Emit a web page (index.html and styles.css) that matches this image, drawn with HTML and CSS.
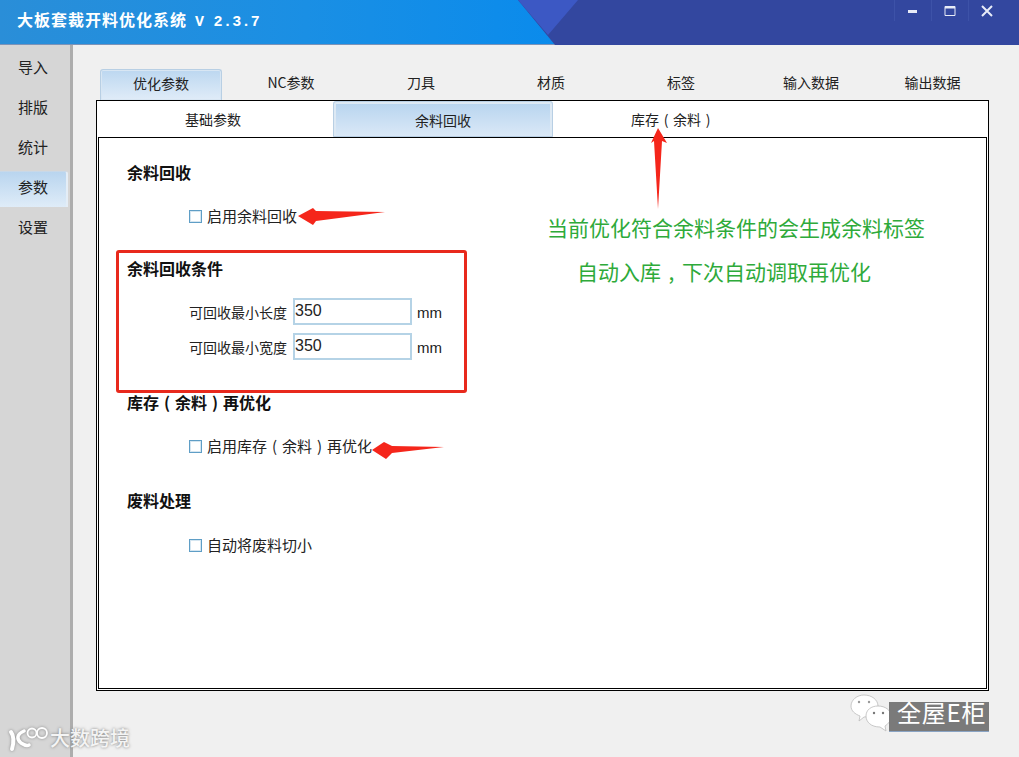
FILE: index.html
```
<!DOCTYPE html>
<html lang="zh">
<head>
<meta charset="utf-8">
<title>大板套裁开料优化系统</title>
<link rel="stylesheet" href="styles.css">
</head>
<body>
<div class="app">
  <header class="titlebar">
    <svg class="title-shape" width="1019" height="45" viewBox="0 0 1019 45">
      <polygon points="518,0 1019,0 1019,45 555,45" fill="#33479f"/>
      <polygon points="518,0 578,0 548,35" fill="#3c58c4"/>
    </svg>
    <h1 class="app-title">大板套裁开料优化系统<span class="version">V 2.3.7</span></h1>
    <div class="win-controls">
      <button class="win-btn" aria-label="最小化"><svg width="12" height="12" viewBox="0 0 12 12"><rect x="1" y="5" width="9" height="3" fill="#e8ecf8"/></svg></button>
      <button class="win-btn" aria-label="最大化"><svg width="12" height="12" viewBox="0 0 12 12"><path d="M1 1.5h10v9H1z" fill="none" stroke="#e8ecf8" stroke-width="1"/><rect x="1" y="1" width="10" height="2.5" fill="#e8ecf8"/></svg></button>
      <button class="win-btn" aria-label="关闭"><svg width="12" height="12" viewBox="0 0 12 12"><path d="M1 1l10 10M11 1L1 11" stroke="#e8ecf8" stroke-width="2"/></svg></button>
    </div>
  </header>
  <div class="workspace">
    <nav class="sidebar">
      <a class="side-item">导入</a>
      <a class="side-item">排版</a>
      <a class="side-item">统计</a>
      <a class="side-item active">参数</a>
      <a class="side-item">设置</a>
    </nav>
    <main class="main">
      <div class="tabs">
        <div class="tab active">优化参数</div>
        <div class="tab">NC参数</div>
        <div class="tab">刀具</div>
        <div class="tab">材质</div>
        <div class="tab">标签</div>
        <div class="tab">输入数据</div>
        <div class="tab last">输出数据</div>
      </div>
      <section class="outer-panel">
        <div class="subtabs">
          <div class="subtab">基础参数</div>
          <div class="subtab active">余料回收</div>
          <div class="subtab">库存<span class="punct">(</span>余料<span class="punct">)</span></div>
        </div>
        <div class="inner-panel">
          <h2 class="sec-title first">余料回收</h2>
          <label class="option"><span class="check"></span>启用余料回收</label>
          <h2 class="sec-title cond">余料回收条件</h2>
          <div class="field"><span class="field-label">可回收最小长度</span><input class="field-input" value="350"><span class="unit">mm</span></div>
          <div class="field"><span class="field-label">可回收最小宽度</span><input class="field-input" value="350"><span class="unit">mm</span></div>
          <h2 class="sec-title stock">库存<span class="punct">(</span>余料<span class="punct">)</span>再优化</h2>
          <label class="option"><span class="check"></span>启用库存<span class="punct">(</span>余料<span class="punct">)</span>再优化</label>
          <h2 class="sec-title waste">废料处理</h2>
          <label class="option last-option"><span class="check"></span>自动将废料切小</label>
        </div>
      </section>
    </main>
  </div>

  <div class="red-box"></div>
  <svg class="arrows" width="1019" height="757" viewBox="0 0 1019 757">
    <polygon points="385,212 316,211 313,208 298,216 313,225 316,221" fill="#f5261b"/>
    <polygon points="444,447 392,446 384,442 372,450 386,459 392,453" fill="#f5261b"/>
    <polygon points="658,128 667,143 662,141 658,209 654,141 651,143" fill="#f5261b"/>
  </svg>
  <p class="note note-a">当前优化符合余料条件的会生成余料标签</p>
  <p class="note note-b">自动入库<span class="punct">,</span>下次自动调取再优化</p>

  <div class="mark-left">
    <svg class="mark-logo" width="44" height="28" viewBox="0 0 44 28">
      <path d="M3 8c3 4 3 10 1 17" fill="none" stroke="#fff" stroke-width="4" stroke-linecap="round"/>
      <path d="M16 7c-7 3-8 8-3 12 3 2 6 3 8 2" fill="none" stroke="#fff" stroke-width="3.5" stroke-linecap="round"/>
      <circle cx="24" cy="9" r="4.5" fill="none" stroke="#fff" stroke-width="1.8"/>
      <circle cx="34" cy="9" r="5" fill="none" stroke="#fff" stroke-width="1.8"/>
    </svg>
    <span class="mark-left-text">大数跨境</span>
  </div>
  <div class="mark-right">
    <svg class="wechat" width="42" height="38" viewBox="0 0 42 38">
      <path d="M14 1c8 0 14 5 14 11s-6 11-14 11l-5 4 1-5C5 20 1 17 1 12 1 6 7 1 14 1z" fill="#fff" stroke="#bbb" stroke-width=".8"/>
      <path d="M28 12c7 0 13 4 13 10 0 5-3 8-6 10l1 5-6-4C21 33 16 28 16 22c0-6 5-10 12-10z" fill="#fff" stroke="#bbb" stroke-width=".8"/>
      <circle cx="9" cy="8" r="1.2" fill="#999"/><circle cx="19" cy="8" r="1.2" fill="#999"/>
      <circle cx="24" cy="19" r="1.2" fill="#777"/><circle cx="33" cy="19" r="1.2" fill="#777"/>
    </svg>
    <span class="mark-right-text">全屋E柜</span>
  </div>
</div>
</body>
</html>
```
FILE: styles.css
```
* { box-sizing: border-box; }
html, body { margin: 0; padding: 0; }
body {
  width: 1019px; height: 757px; overflow: hidden;
  font-family: "Noto Sans CJK SC", "Liberation Sans", sans-serif;
  color: #111; background: #f0f0f0;
}
.punct { display: inline-block; width: 1em; text-align: center; }
.app { position: relative; width: 1019px; height: 757px; display: flex; flex-direction: column; }

.titlebar {
  position: relative; flex: 0 0 45px; height: 45px;
  background: linear-gradient(90deg, #2a8ed8 0%, #1a8fe4 30%, #0a8bec 55%);
  border-bottom: 1px solid #7c93b8;
  display: flex; align-items: center; justify-content: space-between;
}
.title-shape { position: absolute; left: 0; top: 0; }
.app-title {
  position: relative; margin: 0 0 3px 17px;
  font-size: 16px; font-weight: 700; color: #fff; line-height: 20px; white-space: nowrap;
  letter-spacing: 1px;
}
.version { font-family: "Liberation Mono", monospace; font-size: 15px; letter-spacing: 0.3px; font-weight: 700; margin-left: 8px; }
.win-controls { position: relative; align-self: flex-start; display: flex; margin-right: 14px; }
.win-btn {
  width: 37px; height: 21px; padding: 0; border: 0; background: none;
  border-left: 1px solid #3d52a8;
  display: flex; align-items: center; justify-content: center;
}

.workspace { flex: 1; display: flex; min-height: 0; }
.sidebar {
  flex: 0 0 73px; background: #d6d6d6; border-right: 3px solid #adadad;
  padding-top: 2px; display: flex; flex-direction: column;
}
.side-item {
  height: 40px; font-size: 15px; line-height: 40px; padding-left: 18px; color: #222;
}
.side-item.active {
  height: 36px; line-height: 30px; margin: 4px 2px 0 0;
  background: linear-gradient(180deg, #b9d5ef, #dfecf8);
  border-radius: 0 3px 0 0; border-top: 1px solid #c8d8e8; border-right: 2px solid #e4edf6;
}

.main { flex: 1; padding: 25px 30px 0 23px; min-width: 0; }
.tabs { display: flex; height: 30px; }
.tab {
  flex: 0 0 130px; text-align: center; font-size: 14px; line-height: 25px; color: #222;
}
.tab.last { flex: 0 0 113px; }
.tab.active {
  flex: 0 0 122px; margin: -1px 4px 0 4px; line-height: 27px;
  background: linear-gradient(180deg, #bcd7f0, #e0ecf8);
  border: 1px solid #b8cfe4; border-bottom: 0; border-radius: 3px 3px 0 0;
  box-shadow: inset 0 0 0 1px #d8e6f3;
}
.outer-panel {
  width: 893px; height: 591px; background: #fff; border: 1px solid #000;
  padding: 0 1px 1px; display: flex; flex-direction: column;
}
.subtabs { display: flex; height: 36px; flex: 0 0 36px; }
.subtab { flex: 0 0 230px; text-align: center; font-size: 14px; line-height: 36px; color: #222; }
.subtab.active {
  flex: 0 0 220px; margin: 0 5px; line-height: 32px; height: 36px;
  background: linear-gradient(180deg, #b9d5ef, #dbe9f7);
  border: 3px solid #dde9f4; border-bottom: 0; border-radius: 3px 3px 0 0;
  outline: 1px solid #b8cfe4; outline-offset: -1px;
}
.inner-panel { flex: 1; border: 1px solid #000; padding: 0 0 0 28px; background: #fff; }

.sec-title { margin: 0; font-size: 16px; font-weight: 700; line-height: 24px; color: #111; }
.sec-title.first { margin-top: 22px; }
.sec-title.cond { margin-top: 28px; margin-bottom: 18px; }
.sec-title.stock { margin-top: 30px; }
.sec-title.waste { margin-top: 30px; }
.option {
  display: flex; align-items: center; margin: 20px 0 0 62px; height: 24px;
  font-size: 15px; line-height: 24px; color: #222;
}
.option.last-option { margin-top: 21px; }
.check {
  width: 13px; height: 13px; border: 1px solid #5f9ec6; box-shadow: inset 0 0 0 1px #d5e6f1;
  background: #fff; margin-right: 5px; flex: none;
}
.field { display: flex; align-items: center; height: 27px; margin: 0 0 8px 62px; }
.field-label { font-size: 14px; width: 104px; color: #222; white-space: nowrap; }
.field-input {
  width: 119px; height: 27px; border: 2px solid #b5d3e6; padding: 0 0 1px 0;
  font-family: "Liberation Sans", sans-serif; font-size: 16px; color: #222; background: #fff; outline: 0; border-radius: 0;
}
.unit { font-size: 15px; margin-left: 5px; font-family: "Liberation Sans", sans-serif; color: #222; padding-top: 2px; }

.red-box {
  position: absolute; left: 116px; top: 250px; width: 351px; height: 143px;
  border: 3px solid #e8291c; border-radius: 3px;
}
.arrows { position: absolute; left: 0; top: 0; pointer-events: none; }
.note { position: absolute; margin: 0; font-size: 21px; line-height: 28px; color: #2eaa3a; white-space: nowrap; }
.note-a { left: 547px; top: 213px; }
.note-b { left: 577px; top: 257px; }

.mark-left {
  position: absolute; left: 8px; top: 724px; display: flex; align-items: center; gap: 0;
}
.mark-logo { filter: drop-shadow(0 0 1.5px #888); margin-right: -2px; }
.mark-left-text { font-size: 20px; font-weight: 500; color: #f4f4f4; text-shadow: 0 0 3px #777; line-height: 28px; }
.mark-right { position: absolute; left: 850px; top: 694px; width: 140px; height: 40px; }
.wechat { position: absolute; left: 0; top: 0; }
.mark-right-text {
  position: absolute; left: 39px; top: 8px; width: 100px; height: 30px; background: #7a7a7a;
  color: #fff; font-size: 24px; line-height: 20px; letter-spacing: 0.8px; padding-left: 8px; white-space: nowrap;
  border-bottom: 1px solid #8aa4c4;
}
```
